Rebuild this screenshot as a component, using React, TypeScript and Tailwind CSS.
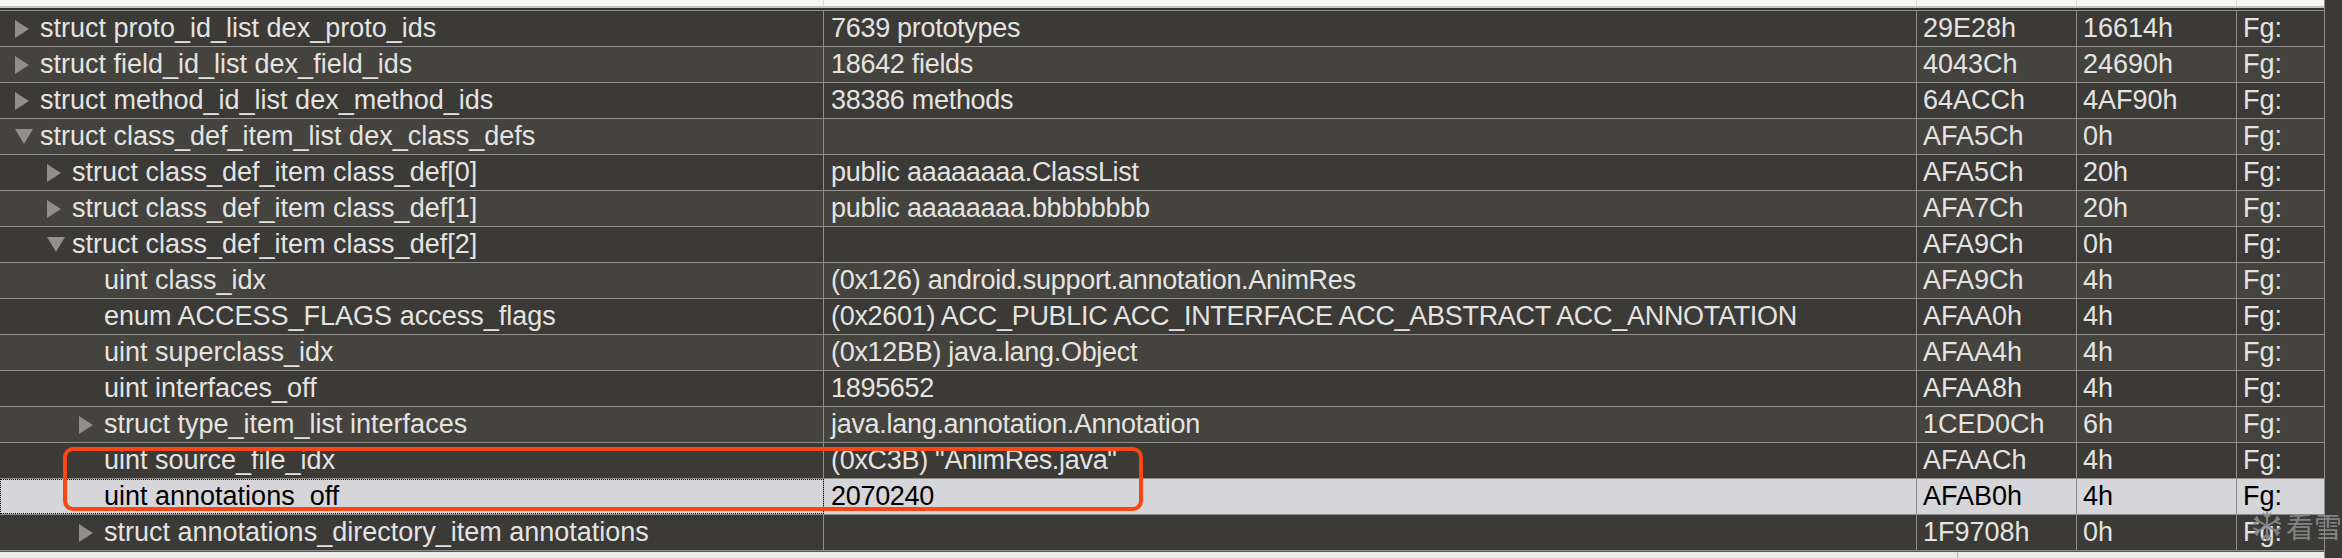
import React from "react";

type Toggle = "open" | "closed" | null;

type Row = {
  name: string;
  level: 0 | 1 | 2;
  toggle: Toggle;
  value: string;
  start: string;
  size: string;
  selected?: boolean;
};

const rows: Row[] = [
  { name: "struct proto_id_list dex_proto_ids", level: 0, toggle: "closed", value: "7639 prototypes", start: "29E28h", size: "16614h" },
  { name: "struct field_id_list dex_field_ids", level: 0, toggle: "closed", value: "18642 fields", start: "4043Ch", size: "24690h" },
  { name: "struct method_id_list dex_method_ids", level: 0, toggle: "closed", value: "38386 methods", start: "64ACCh", size: "4AF90h" },
  { name: "struct class_def_item_list dex_class_defs", level: 0, toggle: "open", value: "", start: "AFA5Ch", size: "0h" },
  { name: "struct class_def_item class_def[0]", level: 1, toggle: "closed", value: "public aaaaaaaa.ClassList", start: "AFA5Ch", size: "20h" },
  { name: "struct class_def_item class_def[1]", level: 1, toggle: "closed", value: "public aaaaaaaa.bbbbbbbb", start: "AFA7Ch", size: "20h" },
  { name: "struct class_def_item class_def[2]", level: 1, toggle: "open", value: "", start: "AFA9Ch", size: "0h" },
  { name: "uint class_idx", level: 2, toggle: null, value: "(0x126) android.support.annotation.AnimRes", start: "AFA9Ch", size: "4h" },
  { name: "enum ACCESS_FLAGS access_flags", level: 2, toggle: null, value: "(0x2601) ACC_PUBLIC ACC_INTERFACE ACC_ABSTRACT ACC_ANNOTATION", start: "AFAA0h", size: "4h" },
  { name: "uint superclass_idx", level: 2, toggle: null, value: "(0x12BB) java.lang.Object", start: "AFAA4h", size: "4h" },
  { name: "uint interfaces_off", level: 2, toggle: null, value: "1895652", start: "AFAA8h", size: "4h" },
  { name: "struct type_item_list interfaces", level: 2, toggle: "closed", value: "java.lang.annotation.Annotation", start: "1CED0Ch", size: "6h" },
  { name: "uint source_file_idx", level: 2, toggle: null, value: '(0xC3B) "AnimRes.java"', start: "AFAACh", size: "4h" },
  { name: "uint annotations_off", level: 2, toggle: null, value: "2070240", start: "AFAB0h", size: "4h", selected: true },
  { name: "struct annotations_directory_item annotations", level: 2, toggle: "closed", value: "", start: "1F9708h", size: "0h" },
];

const indent = ["pl-[15px]", "pl-[47px]", "pl-[79px]"];

function Arrow({ toggle }: { toggle: Toggle }) {
  if (toggle === "closed") {
    return (
      <svg width="14" height="18" viewBox="0 0 14 18">
        <polygon points="0,0 14,9 0,18" fill="#908f8c" />
      </svg>
    );
  }
  if (toggle === "open") {
    return (
      <svg width="18" height="15" viewBox="0 0 18 15">
        <polygon points="0,0 18,0 9,15" fill="#908f8c" />
      </svg>
    );
  }
  return null;
}

function TemplateRow({ row, index }: { row: Row; index: number }) {
  const bg = row.selected
    ? "bg-[#d6d5da] text-black"
    : index % 2 === 0
      ? "bg-[#3b3a36] text-[#e4e3e1]"
      : "bg-[#45433e] text-[#e4e3e1]";
  const line = row.selected ? "border-[#8a898c]" : "border-[#8f8d89]";

  return (
    <div className={`grid grid-cols-[824px_1093px_160px_160px_87px] h-[36px] border-b ${line} ${bg}`}>
      <div
        className={`flex items-center border-r ${line} ${indent[row.level]} ${
          row.selected ? "outline-1 outline-dotted outline-black -outline-offset-1" : ""
        }`}
      >
        <span className="w-[25px] flex items-center">
          <Arrow toggle={row.toggle} />
        </span>
        <span className="whitespace-nowrap">{row.name}</span>
      </div>
      <div className={`flex items-center pl-[7px] border-r ${line} whitespace-nowrap overflow-hidden`}>
        <span className="tracking-[-0.3px]">{row.value}</span>
      </div>
      <div className={`flex items-center pl-[6px] border-r ${line}`}>{row.start}</div>
      <div className={`flex items-center pl-[6px] border-r ${line}`}>{row.size}</div>
      <div className="flex items-center pl-[6px]">Fg:</div>
    </div>
  );
}

function Snowflake() {
  return (
    <svg width="34" height="34" viewBox="0 0 32 32" stroke="#8c8c8c" strokeWidth="2" fill="none">
      <line x1="16" y1="2" x2="16" y2="30" />
      <line x1="4" y1="9" x2="28" y2="23" />
      <line x1="4" y1="23" x2="28" y2="9" />
      <polyline points="12,4 16,8 20,4" />
      <polyline points="12,28 16,24 20,28" />
      <polyline points="3,14 8,12 6,7" />
      <polyline points="29,18 24,20 26,25" />
      <polyline points="3,18 8,20 6,25" />
      <polyline points="29,14 24,12 26,7" />
    </svg>
  );
}

export default function App() {
  return (
    <div className="relative w-[2342px] h-[558px] overflow-hidden bg-[#f4f4f4] font-['Liberation_Sans',Arial,sans-serif] text-[27px] leading-none">
      <div className="flex h-full">
        <div className="w-[2324px] flex flex-col">
          {/* Column header (cut off) */}
          <div className="grid grid-cols-[824px_1093px_160px_160px_87px] h-[6px] bg-[#f6f6f6]">
            <div className="border-r border-[#dcdcdc]" />
            <div className="border-r border-[#dcdcdc]" />
            <div className="border-r border-[#dcdcdc]" />
            <div className="border-r border-[#dcdcdc]" />
            <div />
          </div>
          <div className="h-[2px] bg-[#c4c4c4]" />
          <div className="h-[2px] bg-[#34332f]" />

          {/* Template results */}
          <div className="border-t border-[#8f8d89]">
            {rows.map((row, i) => (
              <TemplateRow key={i} row={row} index={i} />
            ))}
          </div>

          <div className="h-[1px] bg-[#5a5955]" />
          <div className="flex-1 flex bg-[#ececec]">
            <div className="w-[1958px] border-r border-[#b8b8b8]" />
          </div>
        </div>
        <div className="flex-1 bg-[#3b3a37] border-l border-[#8f8d89]" />
      </div>

      {/* Highlight annotation */}
      <div className="absolute left-[63px] top-[447px] w-[1080px] h-[64px] border-[4px] border-[#fb4616] rounded-[10px]" />

      {/* Watermark */}
      <div className="absolute left-[2250px] top-[509px] flex items-center gap-[2px] opacity-90">
        <Snowflake />
        <span className="text-[28px] text-[#8a8a8a] font-['Noto_Sans_CJK_SC',sans-serif]">看雪</span>
      </div>
    </div>
  );
}
